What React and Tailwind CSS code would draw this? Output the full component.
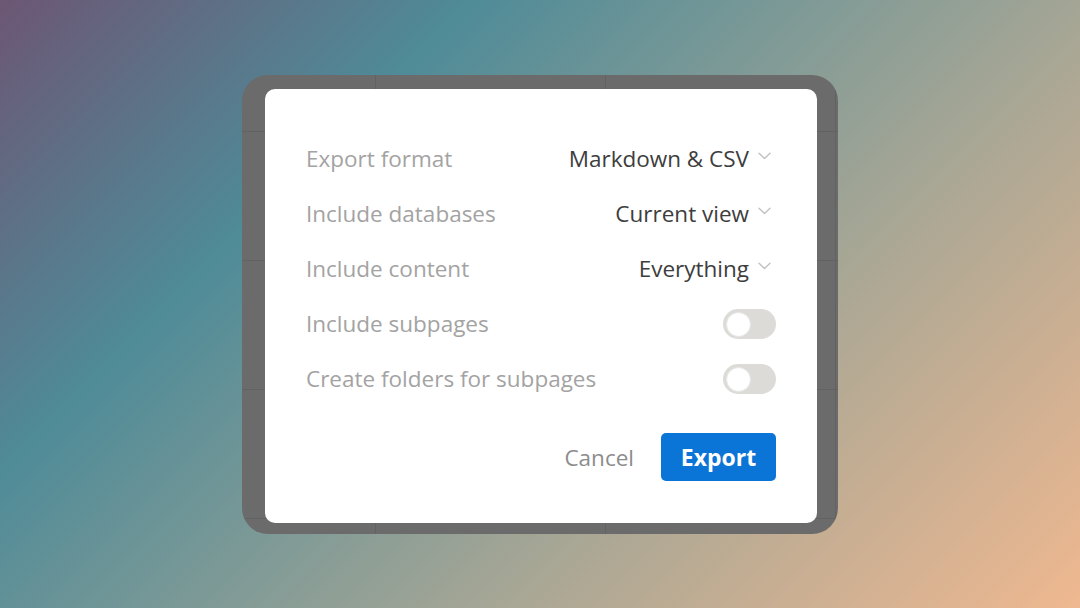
import { useState } from 'react';

const font = { fontFamily: '"Open Sans", "Noto Sans", sans-serif' };

const Chevron = () => (
  <svg width="13" height="8" viewBox="0 0 13 8" fill="none" className="ml-[9px] mr-[5px] mb-[6px]">
    <path d="M1 1.2 L6.5 6.5 L12 1.2" stroke="#c2c2c2" strokeWidth="1.4" strokeLinecap="round" strokeLinejoin="round" />
  </svg>
);

const Toggle = ({ on, onClick }) => (
  <button
    type="button"
    onClick={onClick}
    className={`w-[53px] h-[30px] rounded-full flex items-center px-[3px] ${on ? 'bg-[#0b74d7] justify-end' : 'bg-[#dcdbd7] justify-start'}`}
  >
    <span className="w-[25px] h-[25px] rounded-full bg-white border border-[#e6e6e6]" />
  </button>
);

const SelectRow = ({ label, value }) => (
  <div className="h-[55px] flex items-center justify-between">
    <span className="text-[#a3a3a3]">{label}</span>
    <span className="flex items-center text-[#3d3d3d]">
      {value}
      <Chevron />
    </span>
  </div>
);

const App = () => {
  const [subpages, setSubpages] = useState(false);
  const [folders, setFolders] = useState(false);

  return (
    <div
      className="w-[1080px] h-[608px] flex items-center justify-center bg-[linear-gradient(135deg,#6c5674_0%,#4f8b98_28%,#a6a695_65%,#efb890_100%)]"
      style={font}
    >
      {/* dark frame with faint grid */}
      <div className="w-[596px] h-[459px] rounded-[26px] bg-[#6b6b6b] bg-[linear-gradient(90deg,#626262_1px,transparent_1px),linear-gradient(#626262_1px,transparent_1px)] bg-[size:230px_129px] bg-[position:133px_56px] pl-[23px] pr-[21px] pt-[14px] pb-[11px]">
        <div className="w-full h-full bg-white rounded-[10px] px-[41px] pt-[43px] text-[22.5px]">
          <SelectRow label="Export format" value="Markdown & CSV" />
          <SelectRow label="Include databases" value="Current view" />
          <SelectRow label="Include content" value="Everything" />

          <div className="h-[55px] flex items-center justify-between">
            <span className="text-[#a3a3a3]">Include subpages</span>
            <Toggle on={subpages} onClick={() => setSubpages(!subpages)} />
          </div>
          <div className="h-[55px] flex items-center justify-between">
            <span className="text-[#a3a3a3]">Create folders for subpages</span>
            <Toggle on={folders} onClick={() => setFolders(!folders)} />
          </div>

          <div className="flex items-center justify-end gap-[27px] mt-[26px]">
            <button type="button" className="text-[#8c8c8c] pt-[3px]">Cancel</button>
            <button
              type="button"
              className="w-[115px] h-[48px] rounded-[5px] bg-[#0b74d7] text-white text-[23px] font-bold flex items-center justify-center pt-[2px]"
            >
              Export
            </button>
          </div>
        </div>
      </div>
    </div>
  );
};

export default App;
